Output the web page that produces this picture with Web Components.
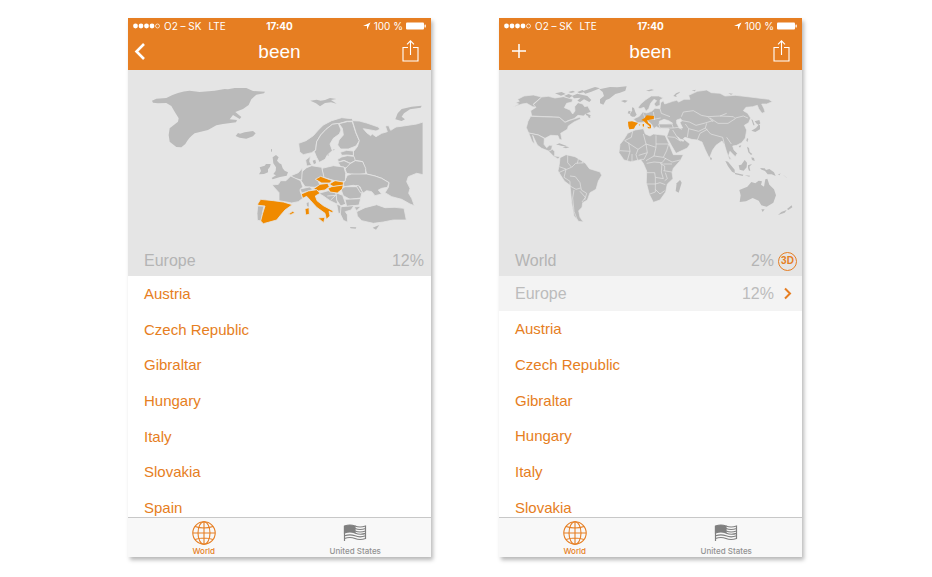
<!DOCTYPE html>
<html lang="en">
<head>
<meta charset="utf-8">
<meta name="viewport" content="width=device-width, initial-scale=1">
<title>been</title>
<style>
  * { box-sizing: border-box; }
  body {
    margin: 0;
    background: #fff;
    font-family: "Liberation Sans", Arial, sans-serif;
    --system-font: Inter, "Liberation Sans", sans-serif;
    --orange: #e67e22;
    --map: #e5e5e5;
    --land: #bababa;
    --visited: #f08a00;
  }
  main {
    display: grid;
    grid-template-columns: repeat(2, minmax(0, 1fr));
    gap: 68px;
    min-height: 100vh;
    padding: 18px 130px 20px 128px;
  }
</style>
</head>
<body>
<main>
  <been-phone>
    <app-header slot="header" action="back">been</app-header>
    <europe-map slot="map"></europe-map>
    <region-row slot="map" percent="12%">Europe</region-row>
    <country-list countries="Austria,Czech Republic,Gibraltar,Hungary,Italy,Slovakia,Spain"></country-list>
    <tab-bar slot="footer"></tab-bar>
  </been-phone>
  <been-phone>
    <app-header slot="header" action="add">been</app-header>
    <world-map slot="map"></world-map>
    <region-row slot="map" percent="2%" action="globe">World</region-row>
    <region-row slot="map" class="sub" percent="12%" action="open">Europe</region-row>
    <country-list countries="Austria,Czech Republic,Gibraltar,Hungary,Italy,Slovakia"></country-list>
    <tab-bar slot="footer"></tab-bar>
  </been-phone>
</main>

<script>
  /* Rules that every component starts with */
  const base = `
    * { box-sizing: border-box; }
    button {
      margin: 0; padding: 0; border: 0; background: none;
      font: inherit; color: inherit; cursor: pointer;
    }
    svg { display: block; }
  `;

  /* One phone screen: header, map, list and tab bar stacked */
  class BeenPhone extends HTMLElement {
    constructor() {
      super();
      this.attachShadow({ mode: "open" });
      this.shadowRoot.innerHTML = `
        <style>${base}
          :host {
            display: flex;
            flex-direction: column;
            background: #fff;
            box-shadow: 2px 3px 4px rgba(0, 0, 0, .28);
          }
          .content { flex: 1; display: flex; flex-direction: column; }
        </style>
        <slot name="header"></slot>
        <slot name="map"></slot>
        <div class="content"><slot></slot></div>
        <slot name="footer"></slot>
      `;
    }
  }
  customElements.define("been-phone", BeenPhone);

  /* Status bar and navigation bar */
  class AppHeader extends HTMLElement {
    constructor() {
      super();
      this.attachShadow({ mode: "open" });
      const actions = {
        back: `<button aria-label="Back"><svg width="24" height="24" viewBox="0 0 24 24"><path d="M16 4L8.500 11.500 16 19" fill="none" stroke="currentColor" stroke-width="2.6"/></svg></button>`,
        add: `<button class="add" aria-label="Add"><svg width="24" height="24" viewBox="0 0 24 24"><path d="M12 4v14M5 11h14" fill="none" stroke="currentColor" stroke-width="1.5"/></svg></button>`
      };
      this.shadowRoot.innerHTML = `
        <style>${base}
          :host { display: block; background: var(--orange); color: #fff; }
          .status, .nav {
            display: grid;
            grid-template-columns: 1fr auto 1fr;
            align-items: center;
          }
          .status {
            height: 16px;
            padding: 0 5px;
            font-family: var(--system-font);
            font-size: 10px;
            line-height: 16px;
          }
          .status div { display: flex; align-items: center; gap: 3px; }
          .status .power { justify-content: flex-end; }
          .status .lte { margin-left: 4px; }
          .nav { height: 36px; }
          .nav button { justify-self: start; }
          .nav .add { padding-left: 8px; }
          .nav .share { justify-self: end; padding-right: 8px; }
          h1 { margin: 0; font-size: 19px; line-height: 24px; font-weight: 300; }
        </style>
        <div class="status">
          <div>
            <svg width="28" height="8" viewBox="0 0 28 8" fill="currentColor">
              <circle cx="2.5" cy="4" r="2.4"/><circle cx="8" cy="4" r="2.4"/>
              <circle cx="13.5" cy="4" r="2.4"/><circle cx="19" cy="4" r="2.4"/>
              <circle cx="24.5" cy="4" r="2" fill="none" stroke="currentColor" stroke-width=".7"/>
            </svg>
            <span>O2 – SK</span><span class="lte">LTE</span>
          </div>
          <strong>17:40</strong>
          <div class="power">
            <svg width="8" height="8" viewBox="0 0 8 8"><path d="M7.500 .5L0 4h4v4z" fill="currentColor"/></svg>
            <span>100 %</span>
            <svg width="20" height="8" viewBox="0 0 20 8" fill="currentColor"><rect y=".5" width="18" height="7" rx="1"/><rect x="18.5" y="2.5" width="1.3" height="3" rx=".6"/></svg>
          </div>
        </div>
        <div class="nav">
          ${actions[this.getAttribute("action")]}
          <h1><slot></slot></h1>
          <button class="share" aria-label="Share">
            <svg width="24" height="24" viewBox="0 0 24 24" fill="none" stroke="currentColor" stroke-width="1.1"><path d="M9 7.500H4v13.500h15v-13.500h-5M11.500 15V.8M8 4.300L11.500 .8 15 4.300"/></svg>
          </button>
        </div>
      `;
    }
  }
  customElements.define("app-header", AppHeader);

  const mapStyle = `
    :host { display: block; background: var(--map); }
    svg { width: 100%; height: auto; }
    path { fill: var(--land); stroke: var(--map); stroke-width: 2.5; stroke-linejoin: round; }
    .visited path, path.visited { fill: var(--visited); }
    .borders path { fill: none; }
    .islands path { stroke: none; }
    path.sea { fill: var(--map); }
  `;

  class EuropeMap extends HTMLElement {
    constructor() {
      super();
      this.attachShadow({ mode: "open" });
      this.shadowRoot.innerHTML = `
        <style>${base}${mapStyle}</style>
        <svg viewBox="0 0 909 528" role="img" aria-label="Map of Europe">
          <!-- Greenland, Iceland, Ireland -->
          <g class="islands">
            <path d="M72 92L85 86 115 84Q150 64 185 62L215 66 260 62 290 57 300 58 320 54 355 54 375 63 411 65 408 70 385 74 370 88 362 105 345 117 322 126 340 141 335 147 315 135 305 148 327 150 324 157 285 162 265 166 240 180 200 190Q185 200 172 222L160 232 145 231 125 215 122 195 125 175 150 155 152 145 140 125 130 108 115 99 90 100 75 98Z"/>
            <path d="M323 198L330 189 336 191 350 187 375 183 383 190 375 199 355 206 335 203Z"/>
            <path d="M393 313L399 303 395 292 410 287 414 282 428 282 426 290 420 298 420 307 408 312Z"/>
            <path d="M429 237l3 1v8l-3-2z"/>
          </g>
          <g transform="translate(426 0)">
            <g class="islands">
              <path d="M8 262L18 255 26 262 21 272 28 280 34 283 38 295 44 302 54 307 50 317 30 321 8 328 5 324 18 316 10 312 17 303 18 292 10 280Z"/>
              <path d="M376 148L383 130 395 117 425 110 455 107 452 113 420 118 402 130 395 140 405 148 395 153Z"/>
              <path d="M121 92L140 89 152 92 165 90 180 84 199 87 183 90 200 101 183 97 165 99 150 109 138 100Z"/>
              <path d="M128 272l8-3 2 10-6 4z"/>
              <path d="M174 247l3 1-2 10-3-2zM190 237l4 1-3 4z"/>
              <path d="M110 399l6-2v13l-5-2z"/>
              <path d="M240 471l19 1-2 4-15-1z"/>
              <path d="M308 473L328 465 318 479Z"/>
            </g>
            <path d="M86 220L108 212 130 197 145 180 160 165 185 152 215 143 245 146 252 153 230 154 210 160 187 163 168 178 152 195 140 215 137 240 125 248 100 254 89 246Z"/>
            <path d="M137 240L140 215 152 195 168 178 187 163 205 160 213 180 208 192 190 205 180 222 187 242 172 255 165 268 148 277 140 262 133 245Z"/>
            <path d="M207 161L232 155 247 155 252 172 258 190 268 212 258 228 235 237 212 237 203 225 207 210 220 195 217 175Z"/>
            <path d="M247 152L268 153 290 159 325 171 330 178 318 183 280 176 290 188 302 197 307 192 318 200 335 190 352 185 346 168 356 167 362 181 378 171 400 168 440 162 459 156V314L440 310 415 320 410 335 420 355 416 370 425 385 433 407 420 402 395 388 365 380 345 368 355 352 357 338 335 325 315 318 290 312 285 295 278 275 250 270 250 245 262 230 268 212 258 188Z"/>
            <path d="M211 247L230 241 250 243 250 257 232 255 215 256Z"/>
            <path d="M203 268L215 261 232 257 252 259 256 272 240 280 222 271 205 276Z"/>
            <path d="M204 277L222 272 240 280 240 290 228 294 212 290Z"/>
            <path d="M240 281L256 272 278 275 287 295 287 311 260 315 230 310 225 297Z"/>
            <path d="M232 316L245 312 290 312 315 318 335 325 357 338 352 352 335 355 325 360 335 372 315 377 305 365 290 362 278 370 270 350 250 346 222 350 220 340Z"/>
            <path d="M156 295L190 287 222 291 227 310 226 333 215 336 190 331 160 322Z"/>
            <path d="M96 305L110 293 125 287 155 292 162 322 142 328 150 345 135 352 105 350 92 330Z"/>
            <path d="M107 270L121 259 119 275 125 286 110 288Z"/>
            <path d="M63 317L85 308 97 294 95 330 72 325Z"/>
            <path d="M6 345L25 343 32 332 48 332 62 318 92 332 98 350 90 362 98 385 85 395 65 399 27 392 27 368Z"/>
            <path d="M90 357L118 351 130 358 112 364 95 369Z"/>
            <path d="M-37 408L-18 408-22 425-26 453-38 451-39 430Z"/>
            <path d="M213 358L225 350 262 350 276 367 272 384 240 388 220 377Z"/>
            <path d="M258 347l8 0 12 20-6 2z"/>
            <path d="M225 388L272 386 267 405 230 410Z"/>
            <path d="M146 370L175 362 198 369 203 403 180 392 160 378Z"/>
            <path d="M172 378L198 376M182 390L196 377"/>
            <path d="M198 368L218 376 227 402 212 408 200 390Z"/>
            <path d="M200 402L212 407 217 430 205 430Z"/>
            <path d="M213 410L252 407 243 420 226 425 232 434 233 457 220 451 211 432Z"/>
            <path d="M252 411L273 409 260 422Z"/>
            <path d="M260 425L285 413 320 404 345 413 375 412 402 415 409 450 370 450 340 456 310 460 275 452 262 438Z"/>
            <g class="visited">
              <path d="M-37 402L-28 388 10 392 40 396 67 404 45 420 32 435 20 450-5 457-20 461-28 453-22 430-15 408-36 406Z"/>
              <path d="M130 357L150 343 173 340 178 350 165 360 145 363Z"/>
              <path d="M136 328L152 319 165 324 187 332 178 339 155 339Z"/>
              <path d="M178 342L195 332 220 336 220 346 190 350Z"/>
              <path d="M174 355L185 350 220 345 217 357 202 369 180 366Z"/>
              <path d="M94 372L115 363 140 359 150 370 136 378 141 392 160 407 190 423 186 428 177 424 180 438 169 448 165 430 140 412 122 392 110 379 98 385Z"/>
              <path d="M144 444L165 442 161 458Z"/>
              <path d="M105 416L117 413 118 433 107 435Z"/>
              <path d="M54 433L68 424 75 428 62 434Z"/>
            </g>
          </g>
        </svg>
      `;
    }
  }
  customElements.define("europe-map", EuropeMap);

  class WorldMap extends HTMLElement {
    constructor() {
      super();
      this.attachShadow({ mode: "open" });
      this.shadowRoot.innerHTML = `
        <style>${base}${mapStyle}
          path { stroke-width: 2; }
        </style>
        <svg viewBox="0 0 909 528" role="img" aria-label="Map of the world">
          <!-- The Americas and Greenland -->
          <g transform="translate(3 18)">
            <path d="M40 93L56 84 47 80 58 76 53 70 72 60 100 57 125 63 112 74 100 84 108 94 98 92 80 82 66 84Z"/>
            <path d="M125 63L145 61 165 66 190 62 218 70 216 78 200 82 193 95 210 102 218 114 225 105 224 92 234 80 248 84 254 92 263 90 273 108 258 114 250 120 234 118 222 128 204 134 195 139 178 124 95 120 92 104 108 94 100 86Z"/>
            <g class="islands">
              <path d="M165 52l20-4 12 6-14 5zM192 60l14-6 12 5-10 7zM216 60l16-7 30 7 12 12-6 6-16-8-12 8-8-4 10-9-20 2zM232 48l16-6 6 6-16 4zM248 46L285 33l15 4-26 10-18 6zM205 48l14-4 6 4-12 3z"/>
              <path d="M263 120l9 4-5 2zM258 112l14 6-2 5-12-6z"/>
              <path d="M298 40L330 33 352 34 380 31 376 44 360 50 346 54 328 68 318 72 310 86 300 82 300 70 312 60 308 48Z"/>
              <path d="M363 75l10-3 10 2-8 6z"/>
              <path d="M168 206l10-4 22 8-14 0-10-3zM188 214l8-3 12 3-10 3z"/>
            </g>
            <path d="M92 121L178 124 195 139 210 133 238 124 243 128 222 138 205 150 202 160 182 172 186 192 178 190 174 179 152 178 135 187 115 177 86 171 79 155 84 136Z"/>
            <path d="M86 171L115 177 133 187 132 205 140 215 148 208 157 208 155 220 148 226 125 217 112 207 98 178 104 205 96 196Z"/>
            <path d="M146 226L157 220 164 226 164 240 180 242 174 249 160 240Z"/>
            <path d="M180 245L198 236 225 242 255 260 268 278 300 288 305 298 295 315 288 340 270 350 262 372 248 380 246 394 236 404 240 424 250 438 236 436 222 420 215 380 210 328 193 315 174 285 178 265Z"/>
            <g class="borders">
              <path d="M203 238v22l12 14 12-12 28-2M178 272l22 8 14-6M176 290l22-10M198 280l-6 24 18 12v14M210 300l16 2 14 18 4 22 16 10-6 20M210 330l18 10 14-4M222 342l-4 24 4 40 10 26M240 346l16 18-10 14M232 262l4-16M246 262l2-8"/>
            </g>
          </g>
          <g transform="translate(333 18)">
            <!-- Eurasia -->
            <path d="M70 129L88 121 98 108 110 111 125 106 135 97 150 98 152 80 160 74 164 84 188 76 200 73 206 78 222 70 240 70 236 58 262 46 290 42 304 50 330 52 345 60 376 58 420 63 476 70 487 77 470 84 455 84 462 98 465 108 456 112 446 98 442 88 428 92 408 94 400 104 413 112 422 126 416 140 403 148 410 162 406 186 395 200 380 208 368 210 372 222 382 232 376 242 360 226 356 238 364 250 358 250 350 228 344 208 336 195 318 208 308 222 298 247 286 222 276 198 262 192 245 190 225 184 220 188 240 204 232 216 198 232 184 208 170 182 178 160 152 158 138 152 132 158 124 144 112 134 96 140 82 140Z"/>
            <path d="M84 95L92 84 106 72 124 60 146 60 160 66 150 72 150 88 138 92 132 84 140 74 132 70 122 82 116 98 108 106 102 94 90 98Z"/>
            <path class="sea" d="M200 132L212 128 216 134 210 140 218 156 208 156 200 142ZM148 136L162 130 176 134 188 142 168 144 148 144ZM152 158L176 158 172 168 150 162Z"/>
            <path class="sea" d="M202 182L212 190 222 192 220 196 208 192Z"/>
            <path d="M146 144L186 144 190 156 150 156Z"/>
            <g class="borders">
              <path d="M220 108l30-4 24 14 20 4 16 16M214 122l6-14M294 122l36-2 40 2 6 6-22 14-30 0-24-16M330 120l20-8M216 134l22 4 20 10 24-6 26-8M226 144l10 14 30 8 20-10 4-14M236 158l-4 26M262 192l8-20 22-12M188 162l14 22M190 156l14-2 12 6M286 156l16 18 36 10M338 184l6 24M350 184l14 20M376 126l24-6 14 6M100 112l6 18 24 0 22-4M130 108l4 24M150 98l4 14 26 10M172 182l22 2 18 12"/>
            </g>
            <!-- Africa -->
            <path d="M53 172L75 162 100 158 106 174 120 180 130 174 165 178 176 202 190 236 220 236 212 252 190 277 186 290 189 308 172 324 167 348 150 372 130 379 118 355 109 320 110 285 100 262 92 251 62 257 42 252 27 230 30 205 42 190Z"/>
            <g class="borders">
              <path d="M68 166l-4 18-20 10M44 194l40 26 24-16-8-30M108 204l30 10 0-36M138 204l38 0M56 200l4 26-30-2M84 220l-6 16 6 20M60 226l-8 28M66 234l0 22M108 204l4 26-26 8M112 230l-10 20-10 0M138 214l-6 26-24 14M132 240l28 4 10-20 6-20M160 244l26 14 24-6M110 262l22-4 24 2-2 28 6 20-24-4-2-14-24 0M156 260l12-14M160 264l26 0M160 284l26 4M136 304l0 20-26 0M136 324l14-4 16 6M136 324l0 24-16 6M136 340l14 14 14-10M166 290l6 18-8 6M150 262l14 8 0 14"/>
            </g>
            <g class="islands">
              <path d="M197 345L200 322 210 312 215 320 206 350Z"/>
              <path d="M60 114l6-10 8 10-4 6h-8zM66 94l6 2 4 12 4 8-6 6-10 0 6-8-4-12zM56 104l6 2-3 8-6-2z" />
              <path d="M108 44l16-4 8 2-14 4zM190 60l8-8 12-5-2 4-10 6 2 6zM245 44l12-3-2 5zM355 52l14 1-6 3z"/>
              <path d="M302 242l4 6-3 5-3-5z"/>
              <path d="M424 130l4 2 6 16-4 0zM434 136l14-4 3 10-5 5-6-4zM424 164l14-8 8-10 4 2 0 12-14 8z"/>
              <path d="M386 210l8-2-4 7zM411 186l4 3-3 9-3-4zM411 212l6 4 2 12 8 6-4 3-8-8zM424 244l8 2 2 9-8-3z"/>
              <path d="M346 255l8 2 20 24 0 10-8-4-12-16zM374 290l26 6-2 4-22-5zM404 298l16 1-2 3zM386 268l8-2 10-14 7 8-1 14-9 10-12-3zM414 268l12-4-8 8 3 12-4 0-3-8zM450 276l14 1 4 5 10-3 14 10 5 11-12-5-12 0-8-10-10-4zM504 296l8-4-4 6zM516 294l16 12-4-2z"/>
              <path d="M389 378L392 358 388 342 412 332 424 318 436 322 446 314 456 316 453 326 462 332 466 310 472 308 478 326 492 340 498 358 490 380 470 392 454 388 446 374 428 366 408 376Z"/>
              <path d="M454 400l10 0-6 8zM545 388l2 6-12 8-4-3zM530 402l-6 8-20 7 10-9z"/>
            </g>
            <g class="visited islands">
              <path d="M54 137L66 136 84 141 76 150 72 158 58 160 55 150Z"/>
              <path d="M94 132l10-6 6-8 22 2-1 9-12 2-8 2 4 8 8 6 0 8-4 4 0-8-12-10-6-6zM111 152l8 2-2 4zM98 144l4 0 0 8-4-1zM86 146l5-1-3 4z"/>
            </g>
          </g>
        </svg>
      `;
    }
  }
  customElements.define("world-map", WorldMap);

  /* Region name with the share of visited countries */
  class RegionRow extends HTMLElement {
    constructor() {
      super();
      this.attachShadow({ mode: "open" });
      const actions = {
        globe: `<button class="globe" aria-label="3D">3D</button>`,
        open: `<button aria-label="Open region"><svg width="19" height="19" viewBox="0 0 19 19"><path d="M7 4.500L12 9.500 7 14.500" fill="none" stroke="currentColor" stroke-width="2"/></svg></button>`
      };
      const action = actions[this.getAttribute("action")] || "";
      this.shadowRoot.innerHTML = `
        <style>${base}
          :host {
            display: flex;
            align-items: center;
            gap: 4px;
            height: 30px;
            padding: 0 ${action ? 5 : 7}px 0 16px;
            background: var(--map);
            color: #b4b4b4;
            font-size: 16px;
            font-weight: 300;
          }
          :host(.sub) { height: 35px; background: #f3f3f3; color: #bcbcbc; }
          .name { flex: 1; }
          button { color: var(--orange); }
          .globe {
            width: 19px;
            height: 19px;
            border: 1px solid;
            border-radius: 50%;
            font-size: 10px;
            line-height: 16px;
            font-weight: 700;
          }
        </style>
        <span class="name"><slot></slot></span>
        <span>${this.getAttribute("percent")}</span>
        ${action}
      `;
    }
  }
  customElements.define("region-row", RegionRow);

  class CountryList extends HTMLElement {
    constructor() {
      super();
      this.attachShadow({ mode: "open" });
      const items = this.getAttribute("countries").split(",")
        .map((name) => `<li>${name}</li>`).join("");
      this.shadowRoot.innerHTML = `
        <style>${base}
          :host { flex: 1; display: flex; }
          ul {
            flex: 1;
            display: flex;
            flex-direction: column;
            justify-content: space-between;
            margin: 0;
            padding: 9px 16px 0;
            list-style: none;
            color: var(--orange);
            font-size: 15px;
            line-height: 18px;
            font-weight: 300;
          }
        </style>
        <ul>${items}</ul>
      `;
    }
  }
  customElements.define("country-list", CountryList);

  class TabBar extends HTMLElement {
    constructor() {
      super();
      this.attachShadow({ mode: "open" });
      this.shadowRoot.innerHTML = `
        <style>${base}
          :host {
            display: grid;
            grid-template-columns: 1fr 1fr;
            height: 40px;
            border-top: 1px solid #c8c8c8;
            background: #f8f8f8;
            color: #929292;
            font-family: var(--system-font);
            font-size: 8px;
            line-height: 10px;
            font-weight: 500;
          }
          button {
            display: flex;
            flex-direction: column;
            align-items: center;
            gap: 1px;
            padding-top: 3px;
          }
          .active { color: var(--orange); }
        </style>
        <button class="active">
          <svg width="24" height="24" viewBox="0 0 24 24" fill="none" stroke="currentColor" stroke-width="1.1">
            <circle cx="12" cy="12" r="11.2"/>
            <ellipse cx="12" cy="12" rx="6" ry="11.2"/>
            <path d="M12 .8v22.4M.8 12h22.4M3 5.5Q12 8.5 21 5.5M3 18.5Q12 15.5 21 18.5"/>
          </svg>
          World
        </button>
        <button>
          <svg width="24" height="24" viewBox="0 0 24 24" fill="none" stroke="#808080" stroke-width="1.2">
            <path d="M1.5 5v15"/>
            <path d="M1.5 5Q7 3 12 5V12Q7 10 1.5 12Z" fill="#808080"/>
            <path d="M12 5Q17 7 22.5 5V17.500Q17 19.500 12 17.500Q7 15.500 1.5 17.500M12 7.500Q17 9.500 22.5 7.500M12 10Q17 12 22.5 10M1.5 14.800Q7 12.800 12 14.800Q17 16.800 22.5 14.800M12 12Q17 14.300 22.500 12.400"/>
          </svg>
          United States
        </button>
      `;
    }
  }
  customElements.define("tab-bar", TabBar);
</script>
</body>
</html>
